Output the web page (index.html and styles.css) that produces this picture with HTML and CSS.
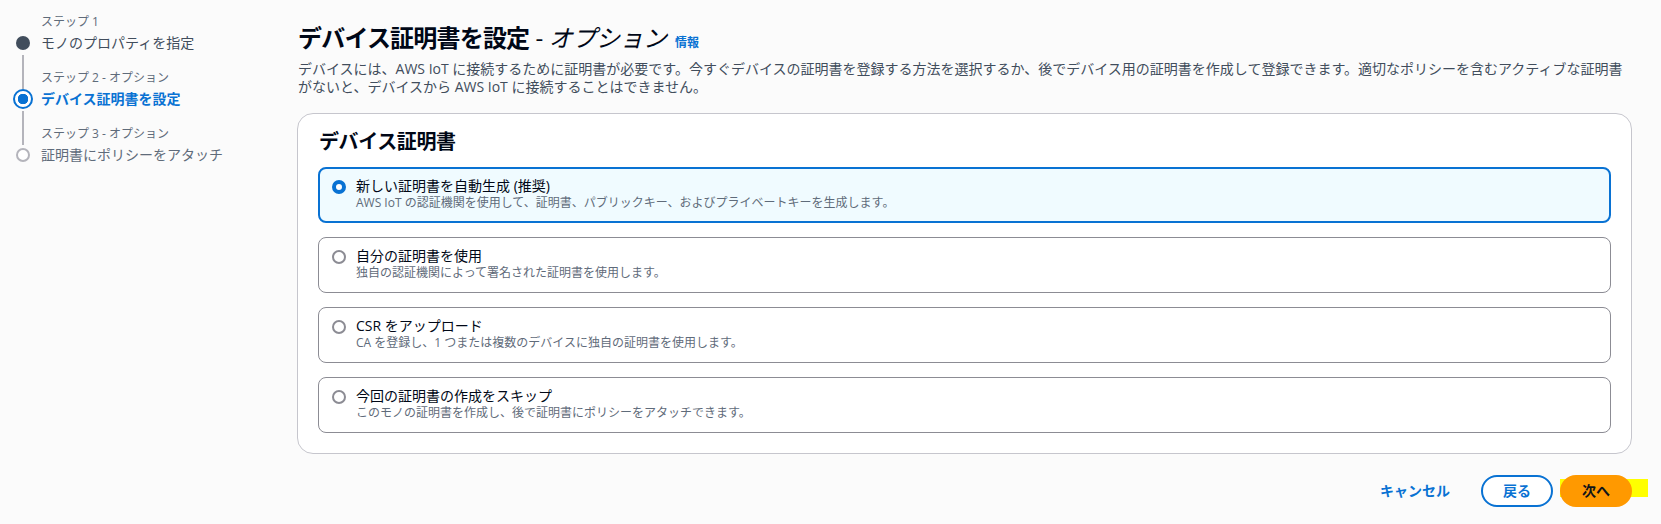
FILE: index.html
```html
<!DOCTYPE html>
<html lang="ja">
<head>
    <meta charset="UTF-8">
    <title>デバイス証明書を設定</title>
    <link rel="stylesheet" href="styles.css">
</head>
<body>
    <div class="layout">
        <nav class="steps">
            <div class="step done">
                <div class="step-marker">
                    <span class="line-top"></span>
                    <span class="dot-box"><span class="dot"></span></span>
                    <span class="line-bottom"></span>
                </div>
                <div class="step-text">
                    <div class="step-label">ステップ 1</div>
                    <div class="step-title">モノのプロパティを指定</div>
                </div>
            </div>
            <div class="step active">
                <div class="step-marker">
                    <span class="line-top"></span>
                    <span class="dot-box"><span class="dot"></span></span>
                    <span class="line-bottom"></span>
                </div>
                <div class="step-text">
                    <div class="step-label">ステップ 2 - オプション</div>
                    <div class="step-title">デバイス証明書を設定</div>
                </div>
            </div>
            <div class="step todo">
                <div class="step-marker">
                    <span class="line-top"></span>
                    <span class="dot-box"><span class="dot"></span></span>
                    <span class="line-bottom"></span>
                </div>
                <div class="step-text">
                    <div class="step-label">ステップ 3 - オプション</div>
                    <div class="step-title">証明書にポリシーをアタッチ</div>
                </div>
            </div>
        </nav>

        <main class="content">
            <h1 class="page-title">
                <span class="title-main">デバイス証明書を設定</span>
                <span class="title-opt">- <em>オプション</em></span>
                <a class="info-link" href="#">情報</a>
            </h1>
            <p class="page-desc">デバイスには、AWS IoT に接続するために証明書が必要です。今すぐデバイスの証明書を登録する方法を選択するか、後でデバイス用の証明書を作成して登録できます。適切なポリシーを含むアクティブな証明書がないと、デバイスから AWS IoT に接続することはできません。</p>

            <section class="panel">
                <h2 class="panel-title">デバイス証明書</h2>
                <div class="tiles">
                    <label class="tile selected">
                        <span class="radio"></span>
                        <span class="tile-text">
                            <span class="tile-title">新しい証明書を自動生成 (推奨)</span>
                            <span class="tile-desc">AWS IoT の認証機関を使用して、証明書、パブリックキー、およびプライベートキーを生成します。</span>
                        </span>
                    </label>
                    <label class="tile">
                        <span class="radio"></span>
                        <span class="tile-text">
                            <span class="tile-title">自分の証明書を使用</span>
                            <span class="tile-desc">独自の認証機関によって署名された証明書を使用します。</span>
                        </span>
                    </label>
                    <label class="tile">
                        <span class="radio"></span>
                        <span class="tile-text">
                            <span class="tile-title">CSR をアップロード</span>
                            <span class="tile-desc">CA を登録し、1 つまたは複数のデバイスに独自の証明書を使用します。</span>
                        </span>
                    </label>
                    <label class="tile">
                        <span class="radio"></span>
                        <span class="tile-text">
                            <span class="tile-title">今回の証明書の作成をスキップ</span>
                            <span class="tile-desc">このモノの証明書を作成し、後で証明書にポリシーをアタッチできます。</span>
                        </span>
                    </label>
                </div>
            </section>

            <div class="actions">
                <button class="btn-link">キャンセル</button>
                <button class="btn-normal">戻る</button>
                <span class="highlight">
                    <button class="btn-primary">次へ</button>
                </span>
            </div>
        </main>
    </div>
</body>
</html>
```

FILE: styles.css
```css
:root {
    --blue: #0972d3;
    --text-dark: #000716;
    --text-body: #414d5c;
    --text-muted: #5f6b7a;
    --line: #b4b4bb;
}

* {
    margin: 0;
    padding: 0;
    box-sizing: border-box;
}

body {
    font-family: 'Open Sans', 'Noto Sans CJK JP', sans-serif;
    background: #fbfbfb;
    color: var(--text-dark);
    width: 1661px;
    height: 524px;
    overflow: hidden;
}

.layout {
    display: flex;
}

/* Steps */
.steps {
    width: 297px;
    flex-shrink: 0;
    padding: 14px 0 0 13px;
}

.step {
    display: grid;
    grid-template-columns: 20px 1fr;
    column-gap: 8px;
}

.step-marker {
    display: flex;
    flex-direction: column;
    align-items: center;
}

.line-top {
    width: 2px;
    height: 19px;
    background: var(--line);
}

.line-bottom {
    width: 2px;
    flex: 1;
    background: var(--line);
    margin-top: 2px;
}

.step:first-child .line-top {
    visibility: hidden;
}

.step:last-child .line-bottom {
    visibility: hidden;
}

.dot-box {
    width: 20px;
    height: 20px;
    display: flex;
    align-items: center;
    justify-content: center;
}

.dot {
    width: 14px;
    height: 14px;
    border-radius: 50%;
}

.done .dot {
    background: var(--text-body);
}

.active .dot {
    width: 20px;
    height: 20px;
    border: 2px solid var(--blue);
    background: radial-gradient(circle, var(--blue) 0 5px, #fff 5.5px);
}

.todo .dot {
    border: 2px solid var(--line);
    background: #fff;
}

.step-text {
    padding-bottom: 17px;
}

.step-label {
    font-size: 12px;
    line-height: 16px;
    color: var(--text-muted);
}

.step-title {
    font-size: 14px;
    line-height: 20px;
    margin-top: 3px;
    color: var(--text-body);
}

.active .step-title {
    color: var(--blue);
    font-weight: 700;
}

.todo .step-title {
    color: var(--text-muted);
}

/* Content */
.content {
    flex: 1;
    padding: 23px 29px 0 0;
}

.page-title {
    font-size: 24px;
    line-height: 30px;
    font-weight: 700;
    color: var(--text-dark);
    padding-left: 1px;
}

.title-main {
    letter-spacing: -0.8px;
}

.title-opt {
    font-weight: 400;
    letter-spacing: -0.4px;
}

.title-opt em {
    font-style: italic;
}

.info-link {
    font-size: 12px;
    line-height: 16px;
    font-weight: 700;
    color: var(--blue);
    text-decoration: none;
    margin-left: 2px;
}

.page-desc {
    font-size: 14px;
    line-height: 18px;
    color: var(--text-body);
    margin-top: 7px;
    padding-left: 1px;
}

/* Panel */
.panel {
    margin-top: 17px;
    background: #fff;
    border: 1px solid #c6c6cd;
    border-radius: 16px;
    padding: 16px 20px 20px;
}

.panel-title {
    font-size: 20px;
    line-height: 24px;
    font-weight: 700;
    color: var(--text-dark);
    padding-left: 1px;
    letter-spacing: -0.4px;
}

.tiles {
    margin-top: 13px;
    display: flex;
    flex-direction: column;
    gap: 14px;
}

.tile {
    display: flex;
    align-items: flex-start;
    gap: 10px;
    height: 56px;
    border: 1px solid #8c8c94;
    border-radius: 8px;
    padding: 9px 13px 11px 13px;
    cursor: pointer;
}

.tile.selected {
    border: 2px solid var(--blue);
    background: #f0fbff;
    padding: 8px 12px 10px 12px;
}

.radio {
    width: 14px;
    height: 14px;
    margin-top: 3px;
    border-radius: 50%;
    border: 2px solid #8c8c94;
    background: #fff;
    flex-shrink: 0;
}

.selected .radio {
    border: 4px solid var(--blue);
}

.tile-text {
    display: flex;
    flex-direction: column;
}

.tile-title {
    font-size: 14px;
    line-height: 18px;
    color: var(--text-dark);
}

.tile-desc {
    font-size: 12px;
    line-height: 16px;
    color: var(--text-muted);
}

/* Actions */
.actions {
    display: flex;
    justify-content: flex-end;
    align-items: center;
    margin-top: 21px;
}

.actions button {
    font-family: inherit;
    font-size: 14px;
    font-weight: 700;
    line-height: 28px;
    height: 32px;
    border-radius: 16px;
    padding: 0 20px;
    cursor: pointer;
}

.btn-link {
    background: none;
    border: 2px solid transparent;
    color: var(--blue);
    margin-right: 9px;
}

.btn-normal {
    background: #fff;
    border: 2px solid var(--blue);
    color: var(--blue);
    margin-right: 7px;
}

.btn-primary {
    background: #ff9900;
    border: 2px solid #ff9900;
    color: #0f141a;
    display: block;
}

.highlight {
    position: relative;
    z-index: 0;
}

.highlight::before {
    content: "";
    position: absolute;
    left: 0;
    right: -16px;
    top: 4px;
    bottom: 10px;
    background: #ffff00;
    z-index: -1;
}
```
